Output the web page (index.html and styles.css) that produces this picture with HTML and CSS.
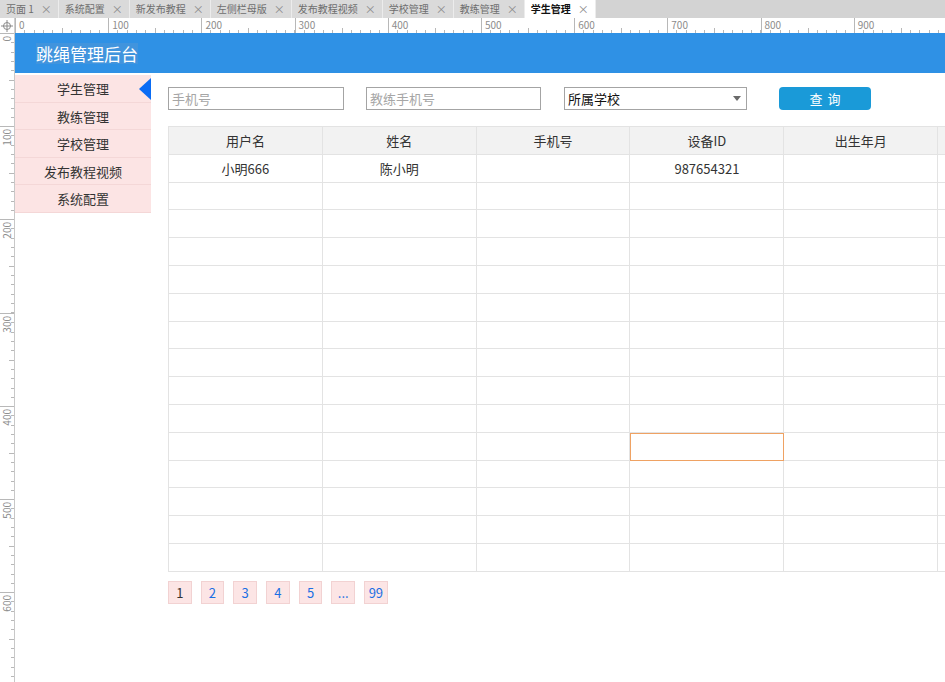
FILE: index.html
```html
<!DOCTYPE html>
<html lang="zh-CN">
<head>
  <meta charset="UTF-8">
  <title>学生管理</title>
  <link rel="stylesheet" href="styles.css">
</head>
<body>

<div class="tabs">
  <div class="tab"><span>页面 1</span><span class="x">×</span></div>
  <div class="tab"><span>系统配置</span><span class="x">×</span></div>
  <div class="tab"><span>新发布教程</span><span class="x">×</span></div>
  <div class="tab"><span>左侧栏母版</span><span class="x">×</span></div>
  <div class="tab"><span>发布教程视频</span><span class="x">×</span></div>
  <div class="tab"><span>学校管理</span><span class="x">×</span></div>
  <div class="tab"><span>教练管理</span><span class="x">×</span></div>
  <div class="tab active"><span>学生管理</span><span class="x">×</span></div>
</div>

<div class="ruler-row">
  <div class="corner">
    <svg width="12" height="12" viewBox="0 0 12 12">
      <circle cx="6" cy="6" r="3.5" fill="none" stroke="#8a8a8a" stroke-width="1"/>
      <path d="M6 0V12M0 6H12" stroke="#8a8a8a" stroke-width="1"/>
    </svg>
  </div>
  <div class="hruler">
    <div class="hcell">0</div>
    <div class="hcell">100</div>
    <div class="hcell">200</div>
    <div class="hcell">300</div>
    <div class="hcell">400</div>
    <div class="hcell">500</div>
    <div class="hcell">600</div>
    <div class="hcell">700</div>
    <div class="hcell">800</div>
    <div class="hcell">900</div>
    <div class="hcell"></div>
  </div>
</div>

<div class="work">
  <div class="vruler">
    <div class="vcell"><span>0</span></div>
    <div class="vcell"><span>100</span></div>
    <div class="vcell"><span>200</span></div>
    <div class="vcell"><span>300</span></div>
    <div class="vcell"><span>400</span></div>
    <div class="vcell"><span>500</span></div>
    <div class="vcell"><span>600</span></div>
    <div class="vcell"><span></span></div>
  </div>

  <div class="canvas">
    <div class="topbar"><h1>跳绳管理后台</h1></div>

    <div class="main">
      <div class="sidebar">
        <div class="nav-item active">学生管理</div>
        <div class="nav-item">教练管理</div>
        <div class="nav-item">学校管理</div>
        <div class="nav-item">发布教程视频</div>
        <div class="nav-item">系统配置</div>
      </div>

      <div class="content">
        <div class="search">
          <input class="field phone" type="text" placeholder="手机号">
          <input class="field coach" type="text" placeholder="教练手机号">
          <div class="select"><span>所属学校</span><i class="caret"></i></div>
          <button class="btn">查询</button>
        </div>

        <table class="grid">
          <tr><th>用户名</th><th>姓名</th><th>手机号</th><th>设备ID</th><th>出生年月</th><th></th></tr>
          <tr><td>小明666</td><td>陈小明</td><td></td><td>987654321</td><td></td><td></td></tr>
          <tr><td></td><td></td><td></td><td></td><td></td><td></td></tr>
          <tr><td></td><td></td><td></td><td></td><td></td><td></td></tr>
          <tr><td></td><td></td><td></td><td></td><td></td><td></td></tr>
          <tr><td></td><td></td><td></td><td></td><td></td><td></td></tr>
          <tr><td></td><td></td><td></td><td></td><td></td><td></td></tr>
          <tr><td></td><td></td><td></td><td></td><td></td><td></td></tr>
          <tr><td></td><td></td><td></td><td></td><td></td><td></td></tr>
          <tr><td></td><td></td><td></td><td></td><td></td><td></td></tr>
          <tr><td></td><td></td><td></td><td></td><td></td><td></td></tr>
          <tr><td></td><td></td><td></td><td class="picked"></td><td></td><td></td></tr>
          <tr><td></td><td></td><td></td><td></td><td></td><td></td></tr>
          <tr><td></td><td></td><td></td><td></td><td></td><td></td></tr>
          <tr><td></td><td></td><td></td><td></td><td></td><td></td></tr>
          <tr><td></td><td></td><td></td><td></td><td></td><td></td></tr>
        </table>

        <div class="pager">
          <span class="page current">1</span>
          <span class="page">2</span>
          <span class="page">3</span>
          <span class="page">4</span>
          <span class="page">5</span>
          <span class="page">...</span>
          <span class="page">99</span>
        </div>
      </div>
    </div>
  </div>
</div>

</body>
</html>
```

FILE: styles.css
```css
body {
  margin: 0;
  width: 945px;
  height: 682px;
  overflow: hidden;
  background: #fff;
  font-family: "Noto Sans CJK SC", "Noto Sans", sans-serif;
}

/* tab strip */
.tabs {
  display: flex;
  height: 18px;
  background: #d3d3d3;
}

.tab {
  display: flex;
  align-items: center;
  gap: 7px;
  padding: 0 6px;
  background: #dadada;
  border-right: 1px solid #ececec;
  font-size: 10px;
  line-height: 18px;
  color: #6e6e6e;
}

.tab .x {
  font-size: 11px;
  color: #8a8a8a;
}

.tab.active {
  background: #fff;
  color: #111;
  font-weight: bold;
}

.tab.active .x {
  font-weight: normal;
}

/* rulers */
.ruler-row {
  display: flex;
  height: 15px;
}

.corner {
  width: 14px;
  display: flex;
  align-items: center;
  justify-content: center;
  border-right: 1px solid #d0d0d0;
  background: #fff;
}

.hruler {
  flex: 1;
  display: flex;
  overflow: hidden;
  background: #fff;
}

.hcell {
  flex: 0 0 93.2px;
  box-sizing: border-box;
  border-left: 1px solid #b8b8b8;
  padding-left: 3px;
  font-size: 10px;
  line-height: 13px;
  color: #8c8c8c;
  background-image:
    linear-gradient(to right, transparent 45.6px, #b8b8b8 45.6px 46.6px, transparent 46.6px),
    repeating-linear-gradient(to right, transparent 0 8.32px, #b8b8b8 8.32px 9.32px);
  background-size: 100% 5px, 100% 3px;
  background-position: left bottom, left bottom;
  background-repeat: no-repeat;
}

.work {
  display: flex;
  height: 649px;
}

.vruler {
  width: 14px;
  flex: 0 0 14px;
  display: flex;
  flex-direction: column;
  overflow: hidden;
  border-right: 1px solid #c8c8c8;
  background: #fff;
}

.vcell {
  flex: 0 0 93.2px;
  box-sizing: border-box;
  border-top: 1px solid #b8b8b8;
  background-image:
    linear-gradient(to bottom, transparent 45.6px, #b8b8b8 45.6px 46.6px, transparent 46.6px),
    repeating-linear-gradient(to bottom, transparent 0 8.32px, #b8b8b8 8.32px 9.32px);
  background-size: 5px 100%, 3px 100%;
  background-position: right top, right top;
  background-repeat: no-repeat;
}

.vcell span {
  display: block;
  writing-mode: vertical-rl;
  transform: rotate(180deg);
  font-size: 10px;
  line-height: 11px;
  color: #8c8c8c;
  margin: 2px 0 0 1px;
}

/* prototype canvas */
.canvas {
  flex: 1;
  min-width: 0;
  overflow: hidden;
}

.topbar {
  height: 40px;
  background: #2f91e5;
  display: flex;
  align-items: center;
  padding-left: 21px;
}

.topbar h1 {
  margin: 0;
  font-size: 17px;
  font-weight: normal;
  line-height: 21px;
  color: #fff;
  background: rgba(120, 160, 200, 0.25);
}

.main {
  display: flex;
  margin-top: 2px;
}

.sidebar {
  width: 136px;
  flex: 0 0 136px;
}

.nav-item {
  position: relative;
  height: 27.6px;
  box-sizing: border-box;
  border-bottom: 1px solid #f4d7d7;
  background: #fce4e4;
  text-align: center;
  font-size: 13px;
  line-height: 27px;
  color: #333;
}

.nav-item.active::after {
  content: "";
  position: absolute;
  right: 0;
  top: 3px;
  border-top: 11px solid transparent;
  border-bottom: 11px solid transparent;
  border-right: 12px solid #0a6cf4;
}

.content {
  flex: 1;
  min-width: 0;
  overflow: hidden;
  padding: 12px 0 0 17px;
}

.search {
  display: flex;
  align-items: center;
  height: 23px;
}

.field {
  height: 23px;
  box-sizing: border-box;
  margin: 0;
  border: 1px solid #a4a4a4;
  padding: 0 3px;
  font-family: inherit;
  font-size: 13px;
  color: #333;
  outline: none;
}

.field::placeholder {
  color: #a6a6a6;
}

.phone {
  width: 176px;
  margin-right: 22px;
}

.coach {
  width: 175px;
  margin-right: 23px;
}

.select {
  width: 183px;
  height: 23px;
  box-sizing: border-box;
  border: 1px solid #a4a4a4;
  display: flex;
  align-items: center;
  justify-content: space-between;
  padding: 0 5px 0 3px;
  margin-right: 32px;
  font-size: 13px;
  color: #111;
}

.caret {
  border-left: 4px solid transparent;
  border-right: 4px solid transparent;
  border-top: 5px solid #6a6a6a;
}

.btn {
  width: 92px;
  height: 23px;
  border: none;
  border-radius: 4px;
  background: #1a9ad8;
  color: #fff;
  font-family: inherit;
  font-size: 13px;
  letter-spacing: 5px;
  text-indent: 5px;
  padding: 0;
}

/* data table */
.grid {
  margin-top: 16px;
  width: 924px;
  table-layout: fixed;
  border-collapse: separate;
  border-spacing: 0;
  border-top: 1px solid #e3e3e3;
  border-left: 1px solid #e3e3e3;
}

.grid tr {
  height: 27.8px;
}

.grid th,
.grid td {
  padding: 0;
  border-right: 1px solid #e3e3e3;
  border-bottom: 1px solid #e3e3e3;
  text-align: center;
  font-size: 13px;
  font-weight: normal;
  color: #333;
}

.grid th {
  background: #f2f2f2;
}

.grid td.picked {
  outline: 1px solid #efa263;
  outline-offset: -1px;
}

/* pagination */
.pager {
  display: flex;
  gap: 9.2px;
  margin-top: 9px;
}

.page {
  width: 23.5px;
  height: 23px;
  box-sizing: border-box;
  border: 1px solid #f2d2d2;
  background: #fce5e5;
  text-align: center;
  font-size: 13px;
  line-height: 21px;
  color: #1b6fe3;
}

.page.current {
  color: #333;
}
```
